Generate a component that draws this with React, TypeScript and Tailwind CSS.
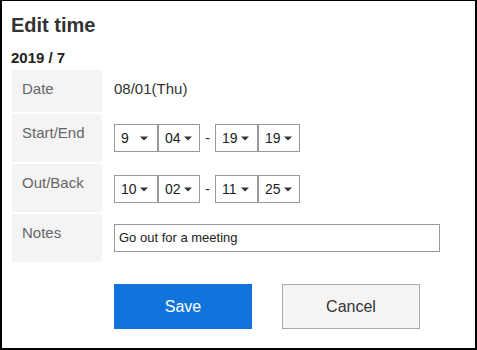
type Sel = { value: string; w: string }

function Arrow() {
  return (
    <svg width="8" height="5" viewBox="0 0 8 5" className="shrink-0">
      <path d="M0 0.5h8L4 4.5z" fill="#333" />
    </svg>
  )
}

function FakeSelect({ value, w }: Sel) {
  return (
    <div className={`${w} h-[28px] border border-[#999] bg-white flex items-center pl-[6px] text-[14px] text-[#222]`}>
      <span className="w-[19px]">{value}</span>
      <Arrow />
    </div>
  )
}

function TimeRange({ from, to }: { from: [string, string]; to: [string, string] }) {
  return (
    <div className="flex items-center">
      <FakeSelect value={from[0]} w="w-[44px]" />
      <FakeSelect value={from[1]} w="w-[42px]" />
      <span className="w-[15px] text-center text-[15px] text-[#333]">-</span>
      <FakeSelect value={to[0]} w="w-[43px]" />
      <FakeSelect value={to[1]} w="w-[42px]" />
    </div>
  )
}

function Label({ children }: { children: string }) {
  return (
    <div className="bg-[#f4f4f4] pl-[10px] pt-[10px] text-[15px] leading-[17px] text-[#666]">
      {children}
    </div>
  )
}

export default function App() {
  return (
    <div className="w-[477px] h-[350px] bg-white border-t border-l-2 border-r-2 border-b-2 border-black font-['Liberation_Sans',Arial,sans-serif] text-[#333] pl-[9px]">
      <h1 className="pt-[13px] text-[20px] leading-[23px] font-bold text-[#333]">Edit time</h1>
      <div className="mt-[12px] text-[15px] leading-[17px] font-bold text-[#222]">2019 / 7</div>

      <div className="mt-[4px] ml-[1px] grid grid-cols-[90px_1fr] grid-rows-[42px_48px_48px_48px] gap-[2px]">
        <Label>Date</Label>
        <div className="pl-[10px] pt-[10px] text-[15px] leading-[17px] text-[#333]">08/01(Thu)</div>

        <Label>Start/End</Label>
        <div className="pl-[10px] pt-[10px]">
          <TimeRange from={['9', '04']} to={['19', '19']} />
        </div>

        <Label>Out/Back</Label>
        <div className="pl-[10px] pt-[11px]">
          <TimeRange from={['10', '02']} to={['11', '25']} />
        </div>

        <Label>Notes</Label>
        <div className="pl-[10px] pt-[10px]">
          <div className="w-[326px] h-[28px] border border-[#999] flex items-center pl-[4px] text-[13px] text-[#222]">
            Go out for a meeting
          </div>
        </div>
      </div>

      <div className="mt-[22px] ml-[103px] flex gap-[30px]">
        <button className="w-[138px] h-[45px] bg-[#1074dc] text-white text-[16px]">Save</button>
        <button className="w-[138px] h-[45px] bg-[#f4f4f4] border border-[#aaa] text-[#333] text-[16px]">Cancel</button>
      </div>
    </div>
  )
}
